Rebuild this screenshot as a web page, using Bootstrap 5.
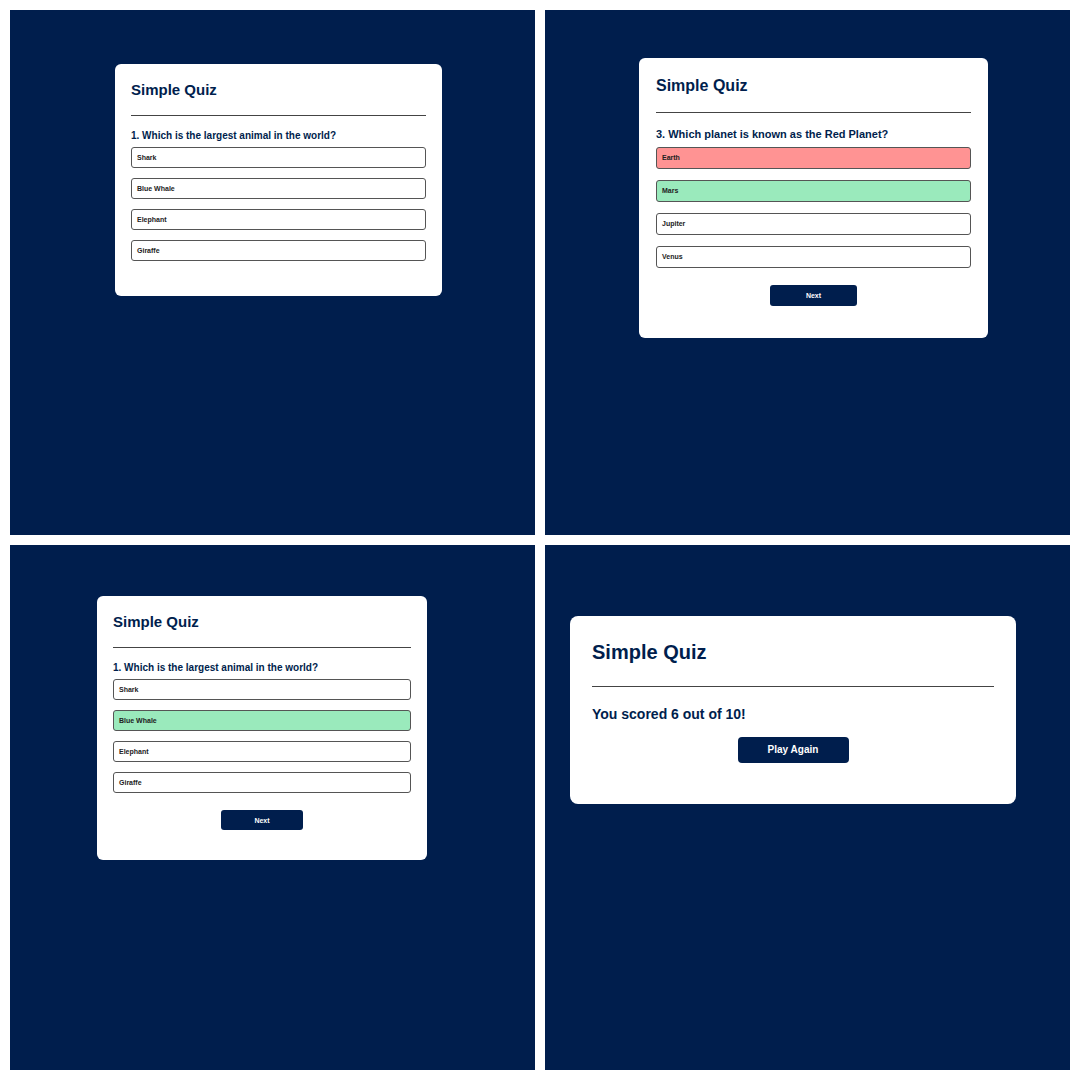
<!DOCTYPE html>
<html lang="en">
<head>
<meta charset="utf-8">
<meta name="viewport" content="width=device-width, initial-scale=1">
<title>Simple Quiz</title>
<link href="https://cdn.jsdelivr.net/npm/bootstrap@5.3.0/dist/css/bootstrap.min.css" rel="stylesheet">
<style>
  body { font-family: "Liberation Sans", Arial, sans-serif; font-weight: 700; background: #fff; }
  .board { padding: 10px; }
  .board > .row { --bs-gutter-x: 10px; --bs-gutter-y: 10px; }
  .screen { background: #001e4d; aspect-ratio: 1; }
  .quiz {
    --pad: 16px; --title: 15px; --ask: 10px; --ask-line: 14px; --txt: 7px;
    --opt-h: 21px; --opt-gap: 10px; --btn-w: 82px; --btn-h: 20px;
    background: #fff; border-radius: 6px; padding: var(--pad);
  }
  .quiz-title { font-size: var(--title); line-height: 20px; font-weight: 700; color: #001e4d; margin: 0; padding-bottom: 15px; border-bottom: 1px solid #444; }
  .ask { font-size: var(--ask); line-height: var(--ask-line); font-weight: 700; color: #001e4d; margin: 13px 0 4px; }
  .answers { gap: var(--opt-gap); }
  .answer {
    height: var(--opt-h); font-size: var(--txt); line-height: 1; font-weight: 700; color: #222;
    background: #fff; border: 1px solid #555; border-radius: 3px; padding: 0 5px 1px;
  }
  .answer.correct { background: #9aeabc; }
  .answer.incorrect { background: #ff9393; }
  .action {
    width: var(--btn-w); height: var(--btn-h); font-size: var(--txt); line-height: 1; font-weight: 700;
    color: #fff; background: #001e4d; border: 0; border-radius: 3px; padding: 0;
  }
  .quiz-start { max-width: 327px; margin: 54px 0 0 105px; padding-bottom: 35px; }
  .quiz-wrong {
    --pad: 17px; --title: 16px; --ask: 11px; --opt-h: 22px; --opt-gap: 11px; --btn-w: 87px; --btn-h: 21px;
    max-width: 349px; margin: 48px 0 0 94px; padding-bottom: 32px;
  }
  .quiz-wrong .quiz-title { line-height: 22px; }
  .quiz-wrong .ask { margin: 14px 0 6px; }
  .quiz-right { max-width: 330px; margin: 51px 0 0 87px; padding-bottom: 30px; }
  .quiz-wrong .action, .quiz-right .action { margin-top: 17px; }
  .quiz-score {
    --pad: 22px; --title: 20px; --ask: 14px; --ask-line: 20px; --txt: 10px; --btn-w: 111px; --btn-h: 26px;
    max-width: 446px; margin: 71px 0 0 25px; border-radius: 8px; padding-bottom: 41px;
  }
  .quiz-score .quiz-title { line-height: 28px; padding-bottom: 20px; }
  .quiz-score .ask { margin: 17px 0 13px; }
  .quiz-score .action { border-radius: 4px; }
</style>
<script src="https://cdn.jsdelivr.net/npm/bootstrap@5.3.0/dist/js/bootstrap.bundle.min.js"></script>
</head>
<body>
<main class="container-fluid board">
  <div class="row row-cols-2 mt-0">
    <div class="col mt-0">
      <section class="screen d-flex align-items-start">
        <div class="quiz quiz-start w-100">
          <h1 class="quiz-title">Simple Quiz</h1>
          <h2 class="ask">1. Which is the largest animal in the world?</h2>
          <div class="answers d-flex flex-column">
            <button type="button" class="answer text-start">Shark</button>
            <button type="button" class="answer text-start">Blue Whale</button>
            <button type="button" class="answer text-start">Elephant</button>
            <button type="button" class="answer text-start">Giraffe</button>
          </div>
        </div>
      </section>
    </div>
    <div class="col mt-0">
      <section class="screen d-flex align-items-start">
        <div class="quiz quiz-wrong w-100">
          <h1 class="quiz-title">Simple Quiz</h1>
          <h2 class="ask">3. Which planet is known as the Red Planet?</h2>
          <div class="answers d-flex flex-column">
            <button type="button" class="answer incorrect text-start">Earth</button>
            <button type="button" class="answer correct text-start">Mars</button>
            <button type="button" class="answer text-start">Jupiter</button>
            <button type="button" class="answer text-start">Venus</button>
          </div>
          <button type="button" class="action d-block mx-auto">Next</button>
        </div>
      </section>
    </div>
    <div class="col">
      <section class="screen d-flex align-items-start">
        <div class="quiz quiz-right w-100">
          <h1 class="quiz-title">Simple Quiz</h1>
          <h2 class="ask">1. Which is the largest animal in the world?</h2>
          <div class="answers d-flex flex-column">
            <button type="button" class="answer text-start">Shark</button>
            <button type="button" class="answer correct text-start">Blue Whale</button>
            <button type="button" class="answer text-start">Elephant</button>
            <button type="button" class="answer text-start">Giraffe</button>
          </div>
          <button type="button" class="action d-block mx-auto">Next</button>
        </div>
      </section>
    </div>
    <div class="col">
      <section class="screen d-flex align-items-start">
        <div class="quiz quiz-score w-100">
          <h1 class="quiz-title">Simple Quiz</h1>
          <h2 class="ask">You scored 6 out of 10!</h2>
          <button type="button" class="action d-block mx-auto">Play Again</button>
        </div>
      </section>
    </div>
  </div>
</main>
</body>
</html>
